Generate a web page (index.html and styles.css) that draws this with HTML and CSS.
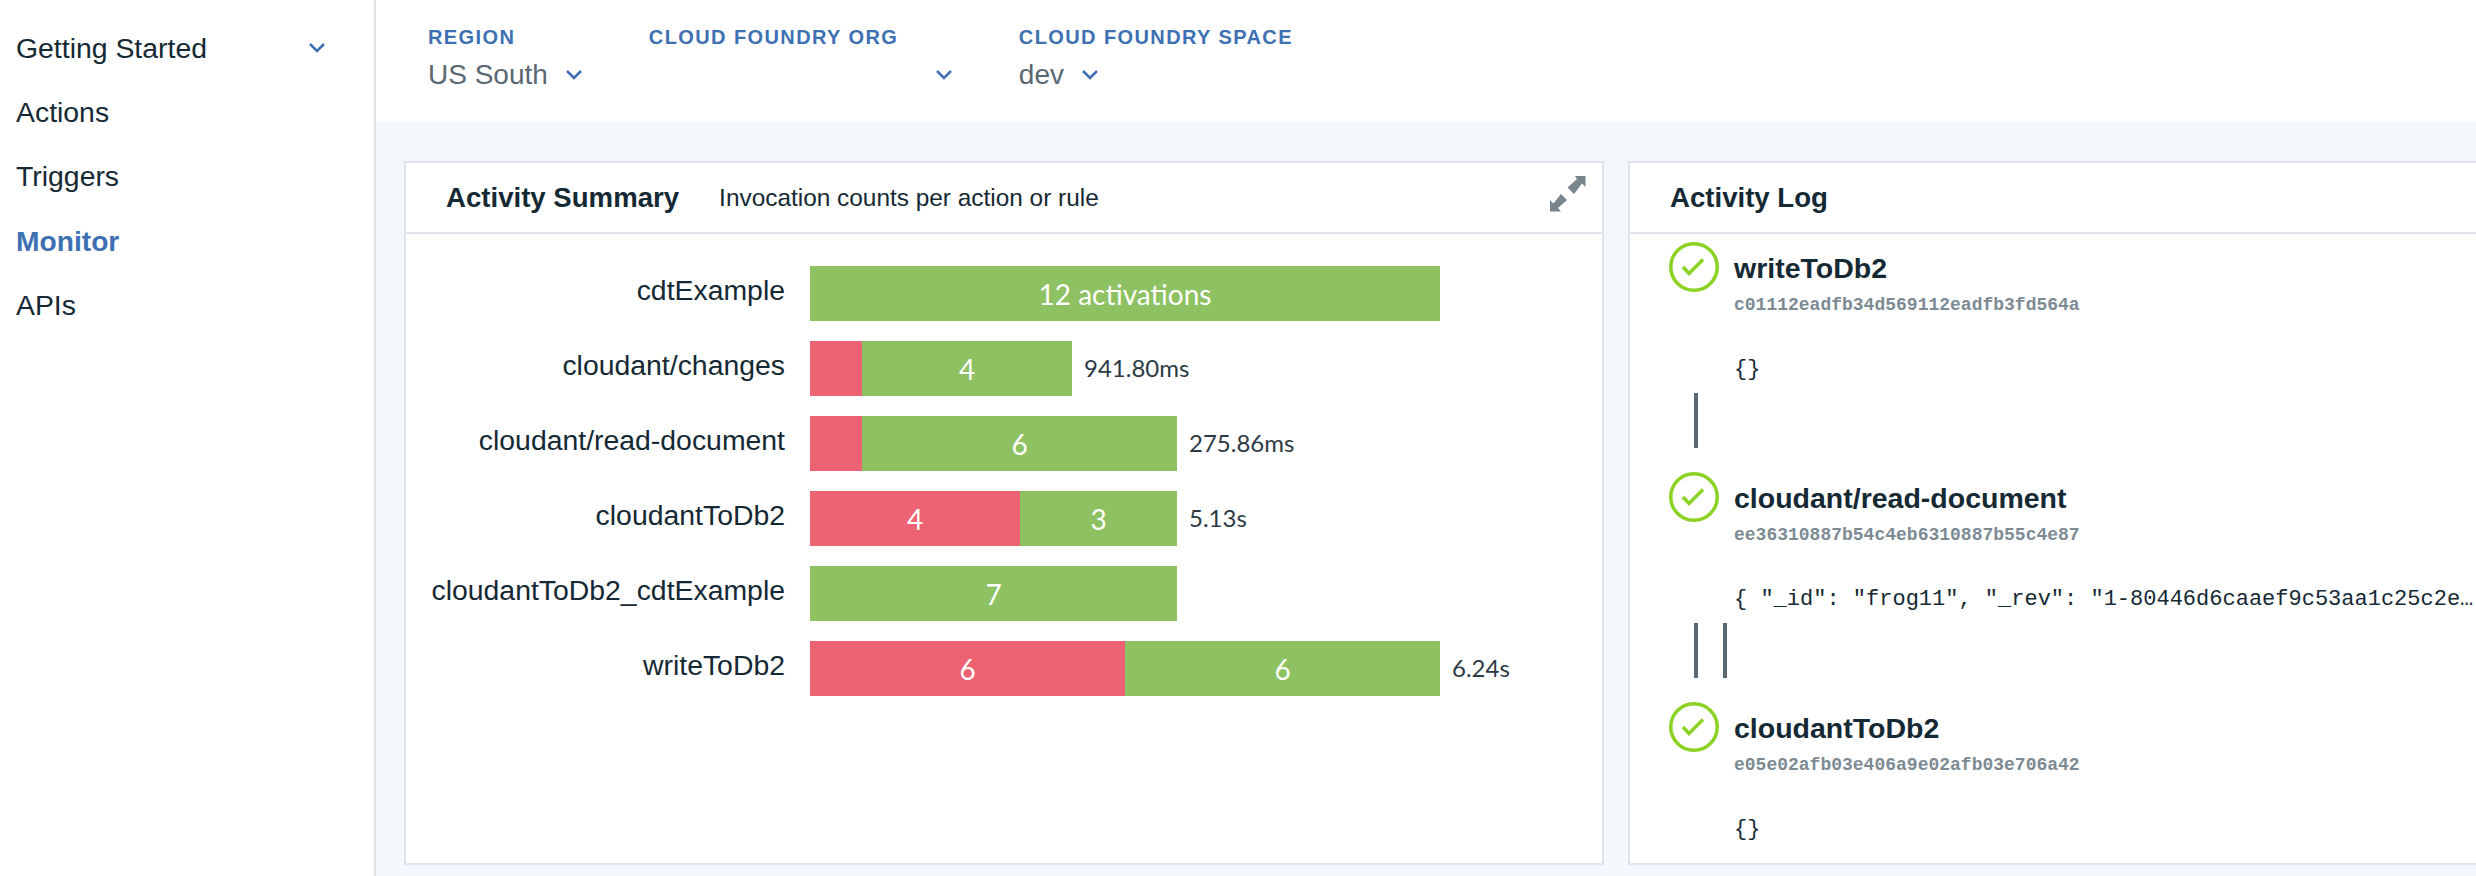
FILE: index.html
```html
<!DOCTYPE html>
<html lang="en">
<head>
  <meta charset="UTF-8" />
  <title>Monitor</title>
  <link rel="stylesheet" href="styles.css">
</head>
<body>
  <nav class="sidebar">
    <a class="nav-item">
      <span>Getting Started</span>
      <svg class="chevron" viewBox="0 0 16 10"><path d="M1 1l7 7 7-7"/></svg>
    </a>
    <a class="nav-item">Actions</a>
    <a class="nav-item">Triggers</a>
    <a class="nav-item active">Monitor</a>
    <a class="nav-item">APIs</a>
  </nav>

  <div class="main">
    <header class="toolbar">
      <div class="picker">
        <div class="picker-label">REGION</div>
        <div class="picker-value">
          <span>US South</span>
          <svg class="chevron" viewBox="0 0 16 10"><path d="M1 1l7 7 7-7"/></svg>
        </div>
      </div>
      <div class="picker">
        <div class="picker-label">CLOUD FOUNDRY ORG</div>
        <div class="picker-value org-value">
          <svg class="chevron" viewBox="0 0 16 10"><path d="M1 1l7 7 7-7"/></svg>
        </div>
      </div>
      <div class="picker">
        <div class="picker-label">CLOUD FOUNDRY SPACE</div>
        <div class="picker-value">
          <span>dev</span>
          <svg class="chevron" viewBox="0 0 16 10"><path d="M1 1l7 7 7-7"/></svg>
        </div>
      </div>
    </header>

    <div class="panels">
      <section class="panel summary">
        <div class="panel-head">
          <h2>Activity Summary</h2>
          <span class="panel-sub">Invocation counts per action or rule</span>
          <svg class="expand" viewBox="0 0 36 36">
            <path d="M25 0H35.500V11L32 7.500 24 18 17.500 11.500 27 3z"/>
            <path d="M0 24L3.500 27.500 11 18 17 24 8 32 11 35.500H0z"/>
          </svg>
        </div>
        <div class="chart">
          <div class="row">
            <div class="row-label">cdtExample</div>
            <div class="bar">
              <div class="seg ok" style="width:630px">12 activations</div>
            </div>
          </div>
          <div class="row">
            <div class="row-label">cloudant/changes</div>
            <div class="bar">
              <div class="seg fail" style="width:52px"></div>
              <div class="seg ok" style="width:210px">4</div>
              <div class="duration">941.80ms</div>
            </div>
          </div>
          <div class="row">
            <div class="row-label">cloudant/read-document</div>
            <div class="bar">
              <div class="seg fail" style="width:52px"></div>
              <div class="seg ok" style="width:315px">6</div>
              <div class="duration">275.86ms</div>
            </div>
          </div>
          <div class="row">
            <div class="row-label">cloudantToDb2</div>
            <div class="bar">
              <div class="seg fail" style="width:210px">4</div>
              <div class="seg ok" style="width:157px">3</div>
              <div class="duration">5.13s</div>
            </div>
          </div>
          <div class="row">
            <div class="row-label">cloudantToDb2_cdtExample</div>
            <div class="bar">
              <div class="seg ok" style="width:367px">7</div>
            </div>
          </div>
          <div class="row">
            <div class="row-label">writeToDb2</div>
            <div class="bar">
              <div class="seg fail" style="width:315px">6</div>
              <div class="seg ok" style="width:315px">6</div>
              <div class="duration">6.24s</div>
            </div>
          </div>
        </div>
      </section>

      <section class="panel log">
        <div class="panel-head">
          <h2>Activity Log</h2>
        </div>
        <div class="log-list">
          <div class="entry">
            <svg class="status" viewBox="0 0 50 50"><circle cx="25" cy="25" r="23.250"/><path d="M14 25l6 6.500L34 17.500"/></svg>
            <div class="entry-body">
              <div class="entry-name">writeToDb2</div>
              <div class="entry-id">c01112eadfb34d569112eadfb3fd564a</div>
              <div class="entry-result">{}</div>
            </div>
          </div>
          <div class="links"><i></i></div>
          <div class="entry">
            <svg class="status" viewBox="0 0 50 50"><circle cx="25" cy="25" r="23.250"/><path d="M14 25l6 6.500L34 17.500"/></svg>
            <div class="entry-body">
              <div class="entry-name">cloudant/read-document</div>
              <div class="entry-id">ee36310887b54c4eb6310887b55c4e87</div>
              <div class="entry-result">{ "_id": "frog11", "_rev": "1-80446d6caaef9c53aa1c25c2e…</div>
            </div>
          </div>
          <div class="links"><i></i><i></i></div>
          <div class="entry">
            <svg class="status" viewBox="0 0 50 50"><circle cx="25" cy="25" r="23.250"/><path d="M14 25l6 6.500L34 17.500"/></svg>
            <div class="entry-body">
              <div class="entry-name">cloudantToDb2</div>
              <div class="entry-id">e05e02afb03e406a9e02afb03e706a42</div>
              <div class="entry-result">{}</div>
            </div>
          </div>
        </div>
      </section>
    </div>
  </div>
</body>
</html>
```

FILE: styles.css
```css
* {
  box-sizing: border-box;
}

body {
  margin: 0;
  height: 876px;
  width: 2476px;
  overflow: hidden;
  display: flex;
  background-color: #fff;
  color: #152934;
  font-family: "Liberation Sans", Arial, sans-serif;
}

.chevron {
  width: 16px;
  height: 10px;
  flex: none;
  fill: none;
  stroke: #3d70b2;
  stroke-width: 2.500;
}

.sidebar {
  width: 376px;
  flex: none;
  padding: 16px 49px 0 16px;
  border-right: 2px solid #dfe3e6;
}

.nav-item {
  display: flex;
  align-items: center;
  justify-content: space-between;
  height: 64.300px;
  font-size: 28.400px;
  color: #152934;
}

.nav-item.active {
  color: #3d70b2;
  font-weight: bold;
  font-size: 28.200px;
}

.main {
  flex: 1;
  min-width: 0;
  display: flex;
  flex-direction: column;
  background-color: #f4f7fb;
}

.toolbar {
  height: 122px;
  flex: none;
  display: flex;
  gap: 67px;
  padding: 25px 0 0 52px;
  background-color: #fff;
}

.picker-label {
  font-size: 20px;
  font-weight: bold;
  letter-spacing: 1.400px;
  line-height: 24px;
  color: #3d70b2;
}

.picker-value {
  display: flex;
  align-items: center;
  gap: 18px;
  height: 36px;
  margin-top: 8px;
  font-size: 28px;
  color: #5a6872;
}

.org-value {
  justify-content: flex-end;
  width: 303px;
}

.panels {
  flex: 1;
  display: flex;
  gap: 24px;
  padding: 39px 0 11px 28px;
  min-height: 0;
}

.panel {
  flex: none;
  background-color: #fff;
  border: 2px solid #dfe6eb;
}

.summary {
  width: 1200px;
}

.log {
  width: 900px;
}

.panel-head {
  display: flex;
  align-items: center;
  height: 71px;
  padding: 0 16px 0 40px;
  border-bottom: 2px solid #dfe6eb;
}

.panel-head h2 {
  margin: 0;
  font-size: 27.600px;
  font-weight: bold;
}

.panel-sub {
  margin-left: 40px;
  font-size: 24.400px;
}

.expand {
  width: 36px;
  height: 36px;
  margin-left: auto;
  margin-top: -8px;
  fill: #78858d;
}

.chart {
  display: flex;
  flex-direction: column;
  gap: 20px;
  padding-top: 32px;
}

.row {
  display: flex;
  align-items: center;
  gap: 25px;
}

.row-label {
  width: 379px;
  flex: none;
  text-align: right;
  font-size: 28.400px;
  margin-top: -6px;
  white-space: nowrap;
}

.bar {
  display: flex;
  align-items: center;
  height: 55px;
  font-family: Lato, sans-serif;
}

.seg {
  height: 55px;
  display: flex;
  align-items: center;
  justify-content: center;
  color: #fff;
  font-size: 28px;
}

.seg.ok {
  background-color: #8dc162;
}

.seg.fail {
  background-color: #ee6373;
}

.duration {
  margin: -2px 0 0 12px;
  font-size: 24px;
  color: #2d3a44;
}

.log-list {
  padding: 8px 0 0 39px;
}

.entry {
  display: flex;
  gap: 15px;
}

.status {
  width: 50px;
  height: 50px;
  flex: none;
}

.status circle {
  fill: none;
  stroke: #8cd222;
  stroke-width: 3.500;
}

.status path {
  fill: none;
  stroke: #8cd222;
  stroke-width: 3.500;
}

.entry-body {
  padding-top: 10px;
}

.entry-name {
  font-size: 28.500px;
  font-weight: bold;
  line-height: 32px;
}

.entry-id {
  margin-top: 11px;
  font-family: "Liberation Mono", monospace;
  font-size: 18px;
  font-weight: bold;
  color: #7c8a93;
  line-height: 20px;
}

.entry-result {
  margin-top: 42px;
  font-family: "Liberation Mono", monospace;
  font-size: 22px;
  line-height: 26px;
  white-space: nowrap;
}

.links {
  display: flex;
  gap: 25px;
  height: 55px;
  margin: 10px 0 24px 25px;
}

.links i {
  display: block;
  width: 4px;
  background-color: #5a6872;
}
```
